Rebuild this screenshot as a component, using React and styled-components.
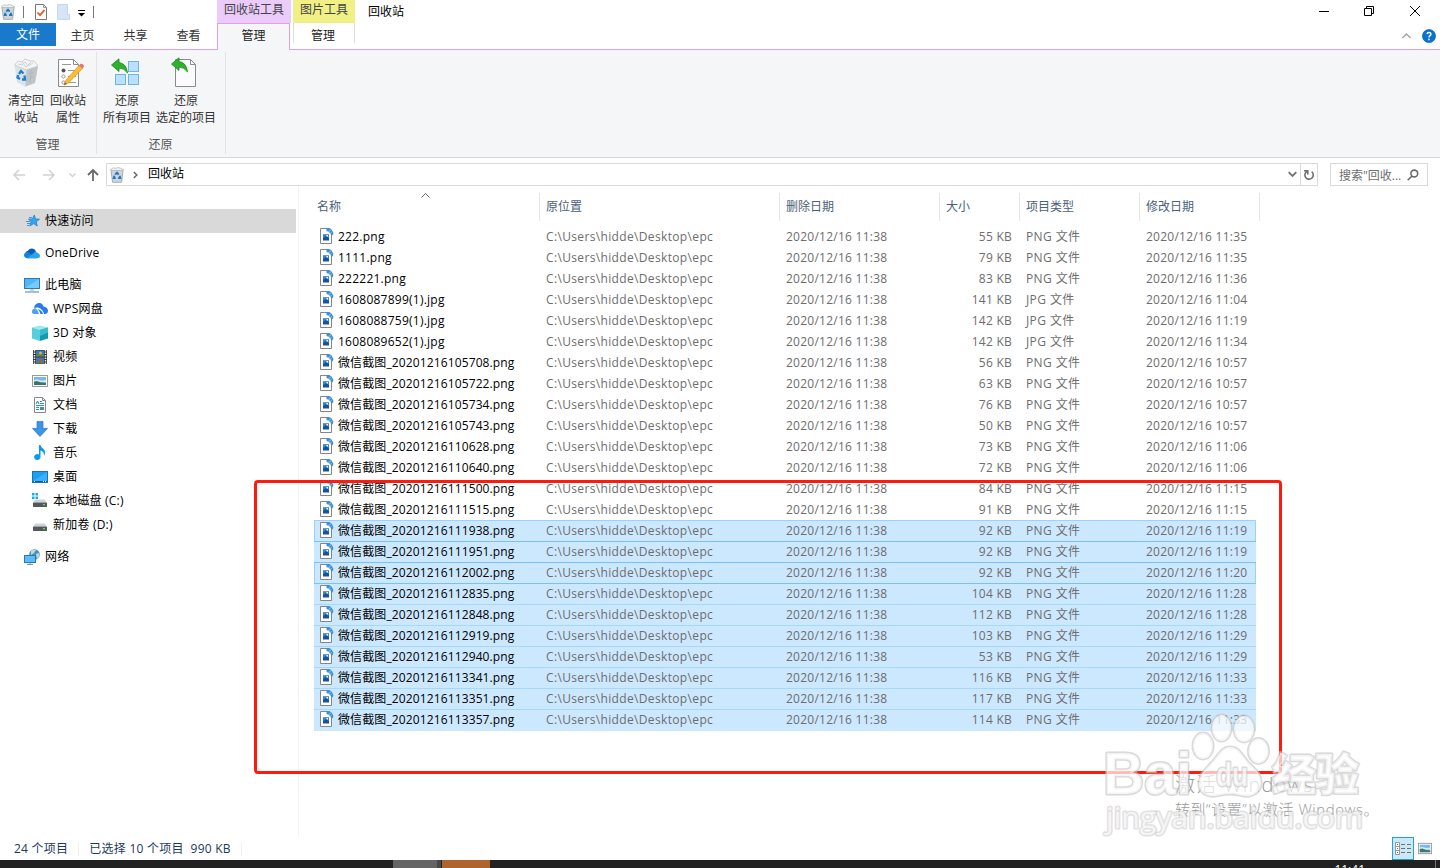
import React from "react";
import styled, { createGlobalStyle } from "styled-components";

const GlobalStyle = createGlobalStyle`
  * {
    box-sizing: border-box;
  }
  body {
    margin: 0;
    background: #fff;
    overflow: hidden;
    font-family: "Open Sans", "Noto Sans CJK SC", sans-serif;
    font-size: 12px;
    color: #000;
  }
  svg {
    display: block;
    flex: none;
  }
`;

const Window = styled.div`
  position: relative;
  width: 1440px;
  height: 868px;
  display: flex;
  flex-direction: column;
  overflow: hidden;
  white-space: nowrap;
`;

/* ---------- title bar + tabs ---------- */

const TitleRow = styled.div`
  height: 23px;
  display: flex;
  flex: none;
`;

const QuickAccess = styled.div`
  width: 217px;
  display: flex;
  align-items: center;
`;

const Divider = styled.div`
  width: 1px;
  height: 12px;
  background: #777;
  margin: 0 ${(p) => p.$right || 0}px 0 ${(p) => p.$left || 0}px;
`;

const QuickArrow = styled.svg`
  margin: 2px 0 0 8px;
`;

const QuickFolder = styled.div`
  margin-left: 10px;
`;

const ContextLabel = styled.div`
  width: ${(p) => p.$width}px;
  margin-right: 2px;
  background: ${(p) => p.$color};
  color: #444;
  text-align: center;
  line-height: 19px;
`;

const Title = styled.div`
  margin-left: 11px;
  line-height: 23px;
  flex: 1;
`;

const WindowButton = styled.div`
  width: 46px;
  height: 21px;
  display: flex;
  align-items: center;
  justify-content: center;
  &:last-child {
    margin-right: 2px;
  }
`;

const TabRow = styled.div`
  height: 27px;
  display: flex;
  flex: none;
  border-bottom: 1px solid #dc9ff0;
`;

const FileTab = styled.div`
  width: 56px;
  height: 23px;
  background: #1979ca;
  color: #fff;
  text-align: center;
  line-height: 24px;
`;

const Tab = styled.div`
  width: 53px;
  text-align: center;
  line-height: 25px;
  color: #333;
`;

const ActiveTab = styled.div`
  width: 73px;
  height: 27px;
  margin-left: 2px;
  background: #f5f6f7;
  border: 1px solid #dc9ff0;
  border-bottom: none;
  text-align: center;
  line-height: 23px;
  color: #222;
`;

const ContextTab = styled.div`
  width: 62px;
  height: 20px;
  margin-left: 3px;
  border-left: 1px solid #ddd;
  border-right: 1px solid #ddd;
  text-align: center;
  line-height: 25px;
  padding-right: 2px;
  color: #222;
`;

const TabTools = styled.div`
  margin-left: auto;
  display: flex;
  align-items: center;
  gap: 11px;
  padding-right: 4px;
`;

/* ---------- ribbon ---------- */

const Ribbon = styled.div`
  height: 108px;
  flex: none;
  display: flex;
  background: #f5f6f7;
  border-bottom: 1px solid #d9dadb;
`;

const RibbonGroup = styled.div`
  width: ${(p) => p.$width}px;
  height: 102px;
  margin-top: 2px;
  border-right: 1px solid #e2e3e4;
  display: flex;
  flex-direction: column;
`;

const RibbonItems = styled.div`
  display: flex;
  flex: none;
  padding-left: 5px;
  height: 84px;
`;

const RibbonButton = styled.div`
  width: ${(p) => p.$width}px;
  padding-top: 5px;
  display: flex;
  flex-direction: column;
  align-items: center;
  color: #333;
  line-height: 17px;
  text-align: center;
  svg {
    margin-bottom: 3px;
  }
`;

const RibbonCaption = styled.div`
  padding-right: 1px;
  text-align: center;
  line-height: 18px;
  color: #555;
`;

/* ---------- address bar ---------- */

const NavBar = styled.div`
  height: 28px;
  flex: none;
  display: flex;
  align-items: center;
  padding-top: 5px;
`;

const NavArrows = styled.div`
  width: 106px;
  padding-left: 12px;
  display: flex;
  align-items: center;
`;

const AddressBox = styled.div`
  width: 1212px;
  height: 23px;
  border: 1px solid #d9d9d9;
  display: flex;
  align-items: center;
  padding-left: 2px;
`;

const CrumbArrow = styled.svg`
  margin-left: 8px;
`;

const Crumb = styled.span`
  margin-left: 10px;
  line-height: 19px;
  padding-bottom: 2px;
  flex: 1;
`;

const Refresh = styled.div`
  width: 17px;
  height: 21px;
  margin-left: 3px;
  border-left: 1px solid #d9d9d9;
  display: flex;
  align-items: center;
  justify-content: center;
`;

const SearchBox = styled.div`
  width: 98px;
  height: 23px;
  margin-left: 12px;
  border: 1px solid #d9d9d9;
  color: #6d6d6d;
  display: flex;
  align-items: center;
  justify-content: space-between;
  padding: 0 8px;
`;

/* ---------- body ---------- */

const Body = styled.div`
  flex: 1;
  display: flex;
  min-height: 0;
`;

const Sidebar = styled.div`
  width: 299px;
  height: 651px;
  padding-top: 23px;
  border-right: 1px solid #f3f3f3;
`;

const SideItem = styled.div`
  width: 296px;
  height: 24px;
  display: flex;
  align-items: center;
  gap: 5px;
  padding-left: ${(p) => (p.$child ? 32 : 24)}px;
  margin-bottom: ${(p) => (p.$gap ? 8 : 0)}px;
  background: ${(p) => (p.$selected ? "#d9d9d9" : "transparent")};
`;

const SideLabel = styled.span`
  padding-bottom: 2px;
  letter-spacing: 0.2px;
`;

const FilePane = styled.div`
  flex: 1;
  padding: 7px 0 0 15px;
`;

const HeaderRow = styled.div`
  display: grid;
  grid-template-columns: 226px 240px 160px 80px 120px 120px;
  height: 28px;
  margin-bottom: 5px;
`;

const HeaderCell = styled.div`
  position: relative;
  border-right: 1px solid #e5e5e5;
  padding-left: ${(p) => (p.$first ? 3 : 6)}px;
  line-height: 27px;
  color: #4c607a;
`;

const SortMark = styled.span`
  position: absolute;
  left: 107px;
  top: 0;
`;

const rowLine = {
  focus: "#99d1ff",
  strong: "#7ac1fb",
  soft: "#a6d8ff",
};

const FileRow = styled.div`
  display: grid;
  grid-template-columns: 226px 240px 160px 80px 120px 116px;
  width: 942px;
  height: 21px;
  line-height: 21px;
  color: #6d6d6d;
  background: ${(p) => (p.$line ? "#cce8ff" : "transparent")};
  box-shadow: ${(p) => (p.$line ? `inset 0 1px ${rowLine[p.$line]}` : "none")}
    ${(p) =>
      p.$boxed ? ", inset 1px 0 #99d1ff, inset -1px 0 #99d1ff" : ""};
  &:last-child {
    height: 22px;
  }
`;

const NameCell = styled.div`
  display: flex;
  align-items: center;
  gap: 4px;
  height: 21px;
  padding-left: 6px;
  color: #000;
  letter-spacing: ${(p) => (p.$latin ? 0.24 : 0.12)}px;
  svg {
    margin-bottom: 2px;
  }
`;

const Cell = styled.div`
  padding: 0 ${(p) => (p.$right ? 8 : 0)}px 0 6px;
  text-align: ${(p) => (p.$right ? "right" : "left")};
  letter-spacing: ${(p) => p.$spacing || 0.25}px;
`;

/* ---------- status bar / taskbar ---------- */

const StatusBar = styled.div`
  height: 23px;
  flex: none;
  display: flex;
  align-items: center;
  padding: 0 4px 0 14px;
  color: #1e395b;
`;

const StatusText = styled.span`
  padding-right: 10px;
  margin-right: 10px;
  line-height: 14px;
  border-right: 1px solid #f0f0f0;
  letter-spacing: 0.25px;
`;

const ViewButton = styled.div`
  width: 22px;
  height: 23px;
  margin-left: ${(p) => (p.$active ? "auto" : "0")};
  display: flex;
  align-items: center;
  justify-content: center;
  background: ${(p) => (p.$active ? "#cbe8f6" : "transparent")};
  border: 1px solid ${(p) => (p.$active ? "#26a0da" : "transparent")};
`;

const Taskbar = styled.div`
  height: 8px;
  flex: none;
  display: flex;
  overflow: hidden;
  background: #222;
  padding-left: 393px;
`;

const TaskBlock = styled.div`
  width: ${(p) => p.$width}px;
  margin-right: ${(p) => p.$gap || 0}px;
  background: ${(p) => p.$color};
`;

const Clock = styled.div`
  margin-left: auto;
  padding-top: 3px;
  line-height: 14px;
  color: #fff;
`;

const ShowDesktop = styled.div`
  width: 5px;
  margin-left: 70px;
  border-left: 1px solid #777;
`;

/* ---------- things lying over the window ---------- */

const RedFrame = styled.div`
  position: absolute;
  left: 254px;
  top: 480px;
  width: 1028px;
  height: 294px;
  border: 3px solid #ff1a0d;
  border-radius: 4px;
`;

const Activation = styled.div`
  position: absolute;
  left: 1175px;
  top: 771px;
  color: #989898;
`;

const ActivationTitle = styled.div`
  font-size: 20px;
  line-height: 28px;
  font-weight: 300;
  letter-spacing: 1.2px;
`;

const ActivationText = styled.div`
  font-size: 15px;
  line-height: 20px;
  font-weight: 300;
  letter-spacing: 0.55px;
`;

const Watermark = styled.svg`
  position: absolute;
  left: 1090px;
  top: 705px;
`;

/* ---------- icons ---------- */

const BinIcon = ({ size = 16 }) => (
  <svg width={size} height={size} viewBox="0 0 16 16">
    <path d="M1.800 2.500h12.400L12.600 15.300H3.600z" fill="#d0d4d7" stroke="#979da2" strokeWidth=".8" />
    <path d="M1.800 2.500 4 .8l3 .5 2-.8 3 .8 2.200 1.200-1 1H2.800z" fill="#eef0f1" stroke="#a4a9ad" strokeWidth=".6" />
    <path d="m6.200 7.600 1.800-2 1.700 2M10.700 8.700l.7 2.500H9M6.800 11.200H4.700L5.500 8.700" fill="none" stroke="#1479cf" strokeWidth="1.800" />
  </svg>
);

const PropsSmallIcon = () => (
  <svg width="12" height="16" viewBox="0 0 12 16">
    <path d="M.5.5h8l3 3v12H.5z" fill="#fff" stroke="#777" />
    <path d="M8.500.5v3h3" fill="none" stroke="#999" />
    <path d="m2.500 8.500 2.500 2.700L9.500 6" fill="none" stroke="#e8591c" strokeWidth="1.800" />
  </svg>
);

const FolderFaintIcon = () => (
  <svg width="13" height="16" viewBox="0 0 13 16">
    <path d="M.5.5h10V11l2-1v5.500H.5z" fill="#d6e5f6" stroke="#c7d8ec" />
  </svg>
);

const BigBin = () => (
  <svg width="32" height="32" viewBox="0 0 32 32">
    <path d="m4.500 8 12 4 11.500-3-3 17-9.500 3.500-8.500-4z" fill="#dfe2e4" />
    <path d="m16.500 12 11.500-3-3 17-9.500 3.500z" fill="#bfc4c8" />
    <path d="M4.500 8 8 4l4 1 3-3 5 2 4 0 4 5-11.500 4z" fill="#f4f5f6" stroke="#c2c6c9" strokeWidth=".8" />
    <path d="m8 7 4 1 3-3 3 4 5-3M12 5l4 5 5-5" fill="none" stroke="#ccd0d3" />
    <path d="m19 17 5-2m-5 7 4-2m-2-7-1 13" stroke="#aeb3b7" strokeWidth=".7" />
    <path d="m9 17 2-3 2.500 2.500M14.500 18.500l.5 4h-3M10 22l-2.500-1.500.6-2.500" fill="none" stroke="#1680d8" strokeWidth="2.300" />
  </svg>
);

const BigProps = () => (
  <svg width="32" height="32" viewBox="0 0 32 32">
    <path d="M6.500 2.500h15l5 5v22h-20z" fill="#fff" stroke="#8a8a8a" />
    <path d="M21.500 2.500v5h5" fill="none" stroke="#8a8a8a" />
    <path d="M10 7.500h9M16 13.500h8M16 19.500h8M16 25.500h8" stroke="#999" />
    <circle cx="11.500" cy="13.500" r="2" fill="#555" />
    <circle cx="11.500" cy="19.500" r="1.600" fill="#fff" stroke="#999" />
    <circle cx="11.500" cy="25.500" r="1.600" fill="#fff" stroke="#999" />
    <path d="m12 28 2-5L27 8.500l3.500 3L17 25.500z" fill="#f9bd3a" stroke="#dc941c" strokeWidth=".7" />
    <path d="m27 8.500 1.500-1.800q3-.5 3.500 2.800L30.500 11.500z" fill="#e7727c" />
    <path d="m12 28 1-2.500 1.800 1.500z" fill="#555" />
  </svg>
);

const GreenArrow = () => (
  <path
    d="M.5 7 8 .8v3.700q7.500 1 8.500 10.500-3.500-5-8.500-5v3.500z"
    fill="#2fb12f"
    stroke="#148a1a"
    strokeWidth=".8"
  />
);

const RestoreAll = () => (
  <svg width="34" height="32" viewBox="0 0 34 32">
    <g fill="#b9e1fb" stroke="#70b4df">
      <rect x="18.500" y="4.500" width="10" height="10" />
      <rect x="5.500" y="17.500" width="10" height="10" />
      <rect x="18.500" y="17.500" width="10" height="10" />
    </g>
    <g transform="translate(1 1)"><GreenArrow /></g>
  </svg>
);

const RestoreOne = () => (
  <svg width="32" height="32" viewBox="0 0 32 32">
    <path d="M5.500 2.500h15l5 5v22h-20z" fill="#fbfbfb" stroke="#8a8a8a" />
    <path d="M20.500 2.500v5h5" fill="none" stroke="#8a8a8a" />
    <g transform="translate(1 0)"><GreenArrow /></g>
  </svg>
);

const FileIcon = () => (
  <svg width="14" height="16" viewBox="0 0 14 16">
    <path d="M.5.5h8.500L11.500 3.500v12H.5z" fill="#fff" stroke="#858585" />
    <path d="M6.500 0q3-.5 5 1.500L13.500 5 12.500 7.500 10.500 6 9 4 6.500 3z" fill="#3d8fd6" />
    <path d="M8.500 4 11 1.500M10 5.500l1.500-1" stroke="#d4eafa" strokeWidth=".7" />
    <rect x="3" y="6.500" width="6" height="6" fill="#16539e" />
    <path d="m3 10 3-2 3 2V6.500H3z" fill="#3486d2" />
    <rect x="6.500" y="7" width="1.500" height="1.500" fill="#fff" />
  </svg>
);

const StarIcon = () => (
  <svg width="16" height="16" viewBox="0 0 16 16">
    <path d="m10.300 2 1.200 4 4 .2-3.300 2.600 1 4.200-3.500-2.400-3.900 2.400 1.300-4.300L4.500 6.200l3.900-.2z" fill="#36a5ec" stroke="#1981d0" strokeWidth=".8" />
    <path d="M5 4.500h3M2 8.500h4M3 10.500h3M3 12.500h2" stroke="#4b92ca" />
  </svg>
);

const OneDriveIcon = () => (
  <svg width="16" height="16" viewBox="0 0 16 16">
    <path d="M3.500 12.500a3.500 3.500 0 0 1 .4-6.700A4.500 4.500 0 0 1 12 6.300L8 11z" fill="#0a5fb8" />
    <path d="M3 13.200Q0 12.500 0 10t3.500-3L13 13.200z" fill="#1583d8" />
    <path d="m3 13.200 6.500-5q2-2.300 4.200-.2 2.300.5 2.300 2.700 0 2.500-3 2.500z" fill="#29a5ea" />
  </svg>
);

const PcIcon = () => (
  <svg width="16" height="16" viewBox="0 0 16 16">
    <rect x=".5" y="1.500" width="15" height="10" fill="#4db8f8" stroke="#3678aa" />
    <path d="M1 11 15 2v9z" fill="#72ccfd" />
    <path d="M6 13h4" stroke="#8cacc0" />
    <path d="M1 15h14" stroke="#8ba8bb" strokeWidth="1.500" />
  </svg>
);

const WpsIcon = () => (
  <svg width="16" height="16" viewBox="0 0 16 16">
    <path d="M2 7.500Q2.500 2 7.500 2q3 0 4 3.500Q15.500 6 16 9.500q0 3-2.500 3.500H12Q11 8 6 6.500 4 6 2 7.500z" fill="#2a7bec" />
    <path d="M1.500 13Q-.5 12 0 9.500 1 7 4 7.500 6 9.500 7 13z" fill="#4ca2fb" />
    <path d="M5.500 8q4.500 1 5.500 5H8.500Q8 10 5.500 8z" fill="#2a7bec" />
  </svg>
);

const CubeIcon = () => (
  <svg width="16" height="16" viewBox="0 0 16 16">
    <path d="m0 2.500 8-2 8 2L8 5z" fill="#9ce9f3" />
    <path d="M0 2.500 8 5v11l-8-2.500z" fill="#55cfdb" />
    <path d="M16 2.500 8 5v11l8-2.500z" fill="#109cad" />
    <path d="m8 5 8-2.500v5L8 11z" fill="#38bccb" />
  </svg>
);

const VideoIcon = () => (
  <svg width="16" height="16" viewBox="0 0 16 16">
    <rect x="1" y="1" width="14" height="14" fill="#333" />
    <path d="M2.500 1v14M13.500 1v14" stroke="#eee" strokeWidth="1.500" strokeDasharray="1.500 1" />
    <rect x="4" y="1.500" width="8" height="6" fill="#3978cf" />
    <rect x="4" y="8.500" width="8" height="6" fill="#3978cf" />
    <path d="m4 6.500 4-2 4 2v1H4zM4 13.500l4-2 4 2v1H4z" fill="#62862e" />
    <circle cx="8.500" cy="4" r="1.500" fill="#edb21f" />
    <circle cx="8.500" cy="11" r="1.500" fill="#d34d25" />
  </svg>
);

const PictureIcon = ({ width = 16, height = 16 }) => (
  <svg width={width} height={height} viewBox="0 0 16 16" preserveAspectRatio="none">
    <rect x=".5" y="2.500" width="15" height="11" fill="#fff" stroke="#999" />
    <rect x="2" y="4" width="12" height="8" fill="#78b8ef" />
    <path d="M2 7q3-1 5 0t7 0v2H2z" fill="#d8edfa" />
    <path d="M2 8.500 5 8l4 1.500 5 .5v2H2z" fill="#3e7768" />
  </svg>
);

const DocIcon = () => (
  <svg width="16" height="16" viewBox="0 0 16 16">
    <path d="M2.500.5h8l3 3v12h-11z" fill="#fff" stroke="#888" />
    <path d="M10.500.5v3h3" fill="none" stroke="#888" />
    <path d="M8 4.500h2M8 6.500h4M4 8.500h8M4 10.500h3M4 12.500h3" stroke="#2b93d2" />
    <path d="m4 7 1.500-3L7 7" fill="none" stroke="#207fc0" />
    <rect x="8" y="10" width="4" height="3" fill="#458cc3" />
  </svg>
);

const DownloadIcon = () => (
  <svg width="16" height="16" viewBox="0 0 16 16">
    <path d="M5 .5h6v7h4.500L8 15.500.5 7.500H5z" fill="#3c94e5" stroke="#2375bf" strokeWidth=".7" />
  </svg>
);

const MusicIcon = () => (
  <svg width="16" height="16" viewBox="0 0 16 16">
    <path d="M7 0h1.500q.5 2.500 3 4 3 3 .5 7 .5-4.500-3.500-5.500V12a3.200 3 0 1 1-1.500-2.500z" fill="#0a9aef" />
  </svg>
);

const DesktopIcon = () => (
  <svg width="16" height="16" viewBox="0 0 16 16">
    <rect x=".5" y="2.500" width="15" height="11" fill="#1c9ef5" stroke="#1774b8" />
    <path d="M1 12 15 3v9z" fill="#38b0fb" />
    <path d="M1 12.500h14" stroke="#105b96" />
    <path d="M2 12.500h1M11 12.500h1M13 12.500h1" stroke="#fff" />
  </svg>
);

const DiskIcon = ({ system }) => (
  <svg width="16" height="16" viewBox="0 0 16 16">
    {system && <path d="M0 0h2.500v2.500H0zM3.500 0H6v2.500H3.500zM0 3.500h2.500V6H0zM3.500 3.500H6V6H3.500z" fill="#14aeea" />}
    <path d="M3.500 6.500h9L15 9.500H1z" fill="#cfd2d4" />
    <rect x="1" y="9.500" width="14" height="4.500" rx=".6" fill="#54585b" />
    <rect x="11" y="11" width="2" height="1.200" fill="#53ea59" />
  </svg>
);

const NetworkIcon = () => (
  <svg width="16" height="16" viewBox="0 0 16 16">
    <circle cx="10.500" cy="5.500" r="5.300" fill="#4d91b8" />
    <path d="M7 2q3-2 5-1l-2 3-3 2zM12 5l3-1q1 4-2 6z" fill="#b9dce8" />
    <rect x=".5" y="6.500" width="11" height="7" fill="#5bbdf7" stroke="#2a78b4" />
    <path d="M6 14v1.500M3 15.500h6" stroke="#7896aa" />
  </svg>
);

/* ---------- data ---------- */

const sideItems = [
  { label: "快速访问", icon: <StarIcon />, selected: true, gap: true },
  { label: "OneDrive", icon: <OneDriveIcon />, gap: true },
  { label: "此电脑", icon: <PcIcon /> },
  { label: "WPS网盘", icon: <WpsIcon />, child: true },
  { label: "3D 对象", icon: <CubeIcon />, child: true },
  { label: "视频", icon: <VideoIcon />, child: true },
  { label: "图片", icon: <PictureIcon />, child: true },
  { label: "文档", icon: <DocIcon />, child: true },
  { label: "下载", icon: <DownloadIcon />, child: true },
  { label: "音乐", icon: <MusicIcon />, child: true },
  { label: "桌面", icon: <DesktopIcon />, child: true },
  { label: "本地磁盘 (C:)", icon: <DiskIcon system />, child: true },
  { label: "新加卷 (D:)", icon: <DiskIcon />, child: true, gap: true },
  { label: "网络", icon: <NetworkIcon /> },
];

const files = [
  ["222.png", 55, "11:35"],
  ["1111.png", 79, "11:35"],
  ["222221.png", 83, "11:36"],
  ["1608087899(1).jpg", 141, "11:04"],
  ["1608088759(1).jpg", 142, "11:19"],
  ["1608089652(1).jpg", 142, "11:34"],
  ["微信截图_20201216105708.png", 56, "10:57"],
  ["微信截图_20201216105722.png", 63, "10:57"],
  ["微信截图_20201216105734.png", 76, "10:57"],
  ["微信截图_20201216105743.png", 50, "10:57"],
  ["微信截图_20201216110628.png", 73, "11:06"],
  ["微信截图_20201216110640.png", 72, "11:06"],
  ["微信截图_20201216111500.png", 84, "11:15"],
  ["微信截图_20201216111515.png", 91, "11:15"],
  ["微信截图_20201216111938.png", 92, "11:19", "focus", true],
  ["微信截图_20201216111951.png", 92, "11:19", "strong"],
  ["微信截图_20201216112002.png", 92, "11:20", "strong", true],
  ["微信截图_20201216112835.png", 104, "11:28", "strong"],
  ["微信截图_20201216112848.png", 112, "11:28", "soft"],
  ["微信截图_20201216112919.png", 103, "11:29", "soft"],
  ["微信截图_20201216112940.png", 53, "11:29", "soft"],
  ["微信截图_20201216113341.png", 116, "11:33", "soft"],
  ["微信截图_20201216113351.png", 117, "11:33", "soft"],
  ["微信截图_20201216113357.png", 114, "11:33", "soft"],
];

const columns = ["名称", "原位置", "删除日期", "大小", "项目类型", "修改日期"];

export default function App() {
  return (
    <Window>
      <GlobalStyle />
      <TitleRow>
        <QuickAccess>
          <BinIcon />
          <Divider $left={7} $right={11} />
          <PropsSmallIcon />
          <QuickFolder><FolderFaintIcon /></QuickFolder>
          <QuickArrow width="8" height="8" viewBox="0 0 8 8">
            <path d="M0 1.500h7" stroke="#000" />
            <path d="M0 4h7L3.500 7.500z" />
          </QuickArrow>
          <Divider $left={7} />
        </QuickAccess>
        <ContextLabel $width={74} $color="#ebcbfa">回收站工具</ContextLabel>
        <ContextLabel $width={62} $color="#f0f086">图片工具</ContextLabel>
        <Title>回收站</Title>
        <WindowButton>
          <svg width="12" height="10"><path d="M2 5.500h10" stroke="#000" /></svg>
        </WindowButton>
        <WindowButton>
          <svg width="10" height="10" fill="none" stroke="#000">
            <path d="M.5 2.500h7v7h-7zM2.500 2.500v-2h7v7h-2" />
          </svg>
        </WindowButton>
        <WindowButton>
          <svg width="10" height="10" stroke="#000"><path d="m0 0 10 10M10 0 0 10" /></svg>
        </WindowButton>
      </TitleRow>
      <TabRow>
        <FileTab>文件</FileTab>
        <Tab>主页</Tab>
        <Tab>共享</Tab>
        <Tab>查看</Tab>
        <ActiveTab>管理</ActiveTab>
        <ContextTab>管理</ContextTab>
        <TabTools>
          <svg width="9" height="6" fill="none" stroke="#a0a0a0" strokeWidth="1.300">
            <path d="m.5 5 4-4 4 4" />
          </svg>
          <svg width="14" height="14" viewBox="0 0 14 14">
            <circle cx="7" cy="7" r="6.600" fill="#0c72cf" stroke="#075fb1" strokeWidth=".6" />
            <path d="M5 5.200q.2-1.700 2-1.700t2 1.600q0 1-1 1.600T7 8.500" fill="none" stroke="#fff" strokeWidth="1.400" />
            <path d="M7 9.700v1.500" stroke="#fff" strokeWidth="1.500" />
          </svg>
        </TabTools>
      </TabRow>

      <Ribbon>
        <RibbonGroup $width={97}>
          <RibbonItems>
            <RibbonButton $width={42}><BigBin />清空回<br />收站</RibbonButton>
            <RibbonButton $width={42}><BigProps />回收站<br />属性</RibbonButton>
          </RibbonItems>
          <RibbonCaption>管理</RibbonCaption>
        </RibbonGroup>
        <RibbonGroup $width={129}>
          <RibbonItems>
            <RibbonButton $width={50}><RestoreAll />还原<br />所有项目</RibbonButton>
            <RibbonButton $width={68}><RestoreOne />还原<br />选定的项目</RibbonButton>
          </RibbonItems>
          <RibbonCaption>还原</RibbonCaption>
        </RibbonGroup>
      </Ribbon>

      <NavBar>
        <NavArrows>
          <svg width="90" height="14" viewBox="0 0 90 14" fill="none" strokeWidth="1.500">
            <path d="M13 7H2m5-5L2 7l5 5M31 7h11m-5-5 5 5-5 5" stroke="#d2d2d2" />
            <path d="m57.500 5.500 3 3 3-3" stroke="#d2d2d2" />
            <path d="M81 13V2m-5 5 5-5 5 5" stroke="#686868" strokeWidth="1.800" />
          </svg>
        </NavArrows>
        <AddressBox>
          <BinIcon />
          <CrumbArrow width="5" height="8" fill="none" stroke="#666" strokeWidth="1.500">
            <path d="m.8 1 3 3-3 3" />
          </CrumbArrow>
          <Crumb>回收站</Crumb>
          <svg width="9" height="7" fill="none" stroke="#707070" strokeWidth="1.800">
            <path d="m.7 1.200 3.800 3.800 3.800-3.800" />
          </svg>
          <Refresh>
            <svg width="12" height="12" viewBox="0 0 12 12" fill="none" stroke="#707070" strokeWidth="1.600">
              <path d="M8.700 2.700A4.200 4.200 0 1 1 4 2.300M1 1.800h3.800V5.500" />
            </svg>
          </Refresh>
        </AddressBox>
        <SearchBox>
          搜索"回收...
          <svg width="12" height="12" viewBox="0 0 12 12" fill="none" stroke="#6a6a6a" strokeWidth="1.600">
            <circle cx="7.300" cy="4.500" r="3.400" />
            <path d="M5 7 .7 11.300" />
          </svg>
        </SearchBox>
      </NavBar>

      <Body>
        <Sidebar>
          {sideItems.map((item) => (
            <SideItem key={item.label} $child={item.child} $gap={item.gap} $selected={item.selected}>
              {item.icon}
              <SideLabel>{item.label}</SideLabel>
            </SideItem>
          ))}
        </Sidebar>
        <FilePane>
          <HeaderRow>
            {columns.map((name, i) => (
              <HeaderCell key={name} $first={i === 0}>
                {name}
                {i === 0 && (
                  <SortMark>
                    <svg width="9" height="5" fill="none" stroke="#666"><path d="m.5 4.500 4-4 4 4" /></svg>
                  </SortMark>
                )}
              </HeaderCell>
            ))}
          </HeaderRow>
          {files.map(([name, size, time, line, boxed]) => (
            <FileRow key={name} $line={line} $boxed={boxed}>
              <NameCell $latin={!name.startsWith("微")}><FileIcon />{name}</NameCell>
              <Cell $spacing={0.35}>C:\Users\hidde\Desktop\epc</Cell>
              <Cell>2020/12/16 11:38</Cell>
              <Cell $right>{size} KB</Cell>
              <Cell $spacing={0.4}>{name.endsWith("jpg") ? "JPG" : "PNG"} 文件</Cell>
              <Cell>2020/12/16 {time}</Cell>
            </FileRow>
          ))}
        </FilePane>
      </Body>

      <StatusBar>
        <StatusText>24 个项目</StatusText>
        <StatusText>已选择 10 个项目&nbsp; 990 KB</StatusText>
        <ViewButton $active>
          <svg width="16" height="14" viewBox="0 0 16 14">
            <path d="M.5.5h4v12h-4zM.5 4.500h4M.5 8.500h4" fill="#fff" stroke="#999" />
            <path d="M6 2.500h4m2 0h4M6 6.500h4m2 0h4M6 10.500h4m2 0h4" stroke="#707070" />
            <path d="M2 2.500h1" stroke="#26733f" />
            <path d="M2 6.500h1" stroke="#2672c3" />
            <path d="M2 10.500h1" stroke="#c33" />
          </svg>
        </ViewButton>
        <ViewButton><PictureIcon width={14} height={15} /></ViewButton>
      </StatusBar>
      <Taskbar>
        <TaskBlock $width={44} $color="#656565" />
        <TaskBlock $width={4} $gap={1} $color="#484848" />
        <TaskBlock $width={48} $color="#ae642c" />
        <Clock>11:41</Clock>
        <ShowDesktop />
      </Taskbar>

      <RedFrame />
      <Activation>
        <ActivationTitle>激活 Windows</ActivationTitle>
        <ActivationText>转到“设置”以激活 Windows。</ActivationText>
      </Activation>
      <Watermark width="290" height="140" viewBox="1090 705 290 140">
        <g
          fill="#fff"
          fillOpacity=".7"
          stroke="#c4c4c4"
          strokeOpacity=".65"
          strokeWidth="3"
          strokeLinejoin="round"
          paintOrder="stroke"
          fontFamily='"Liberation Sans", "Noto Sans CJK SC", sans-serif'
          fontWeight="700"
        >
          <ellipse cx="1203" cy="746" rx="10" ry="13" />
          <ellipse cx="1221.500" cy="728" rx="9.500" ry="13" />
          <ellipse cx="1244" cy="729" rx="10" ry="13" />
          <ellipse cx="1258.500" cy="751" rx="10" ry="12.500" />
          <path d="M1230 747c9 0 12 8 18 15 7 7 14 12 13 22-1 9-9 13-17 12-6-1-9-2-14-2s-9 1-15 2c-9 1-16-4-16-12 0-10 7-15 13-22 6-6 9-15 18-15z" />
          <text x="1103" y="794" fontSize="59" textLength="89" lengthAdjust="spacingAndGlyphs">Bai</text>
          <text x="1216" y="786" fontSize="34" textLength="32" lengthAdjust="spacingAndGlyphs">du</text>
          <text x="1272" y="791" fontSize="44" textLength="87" fontWeight="900">经验</text>
          <text x="1106" y="828" fontSize="29" textLength="257" lengthAdjust="spacingAndGlyphs" fontFamily='"Open Sans", sans-serif' fontWeight="400" strokeWidth="3" strokeOpacity=".5">
            jingyan.baidu.com
          </text>
        </g>
      </Watermark>
    </Window>
  );
}
